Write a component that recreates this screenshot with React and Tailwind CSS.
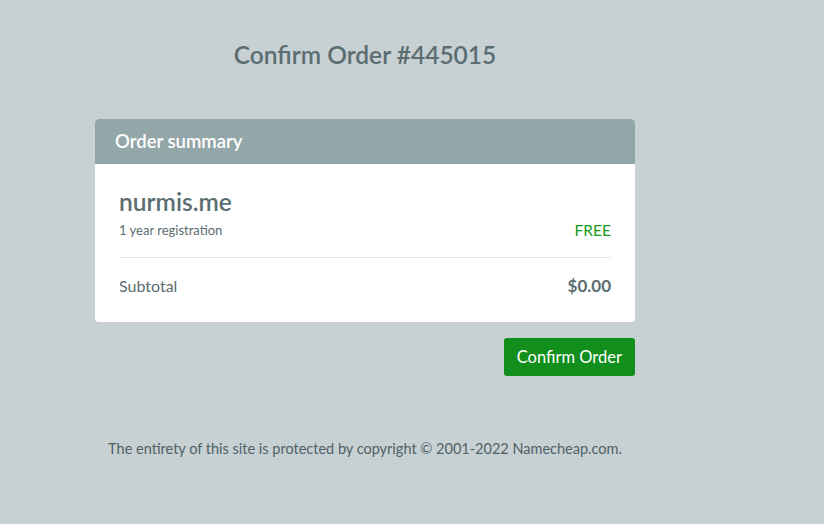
import React from "react"

const font = { fontFamily: "Lato, 'Noto Sans', sans-serif" }

export default function App() {
  return (
    <div className="min-h-screen w-full bg-[#c7d0d3] text-[#546a6e]" style={font}>
      <div className="ml-[95px] w-[540px] pt-[40px]">
        <h1 className="text-center text-[24.5px] font-semibold leading-[30px] text-[#5b6d71]">
          Confirm Order #445015
        </h1>

        <div className="mt-[49px] overflow-hidden rounded-[4px] bg-white">
          <div className="flex h-[45px] items-center bg-[#94a7a8] px-[20px] text-[18.5px] font-semibold text-white">
            Order summary
          </div>
          <div className="px-[24px]">
            <div className="pt-[23px] pb-[15px]">
              <div className="text-[24.5px] font-semibold leading-[30px] text-[#5b6d71]">nurmis.me</div>
              <div className="mt-[2px] flex items-center justify-between">
                <span className="text-[13px] text-[#5b6d71]">1 year registration</span>
                <span className="text-[15.5px] text-[#1a9a1a]">FREE</span>
              </div>
            </div>
            <div className="border-t border-[#e3e6e7]" />
            <div className="flex items-center justify-between pt-[18px] pb-[26px] leading-[20px]">
              <span className="text-[16px] text-[#5b6d71]">Subtotal</span>
              <span className="text-[17px] font-bold text-[#5b6d71]">$0.00</span>
            </div>
          </div>
        </div>

        <div className="mt-[16px] flex justify-end">
          <button className="h-[38px] rounded-[3px] bg-[#118e1c] px-[13px] text-[16.5px] text-white">
            Confirm Order
          </button>
        </div>

        <p className="mt-[62px] text-center text-[14.5px] text-[#4f6266]">
          The entirety of this site is protected by copyright © 2001-2022 Namecheap.com.
        </p>
      </div>
    </div>
  )
}
